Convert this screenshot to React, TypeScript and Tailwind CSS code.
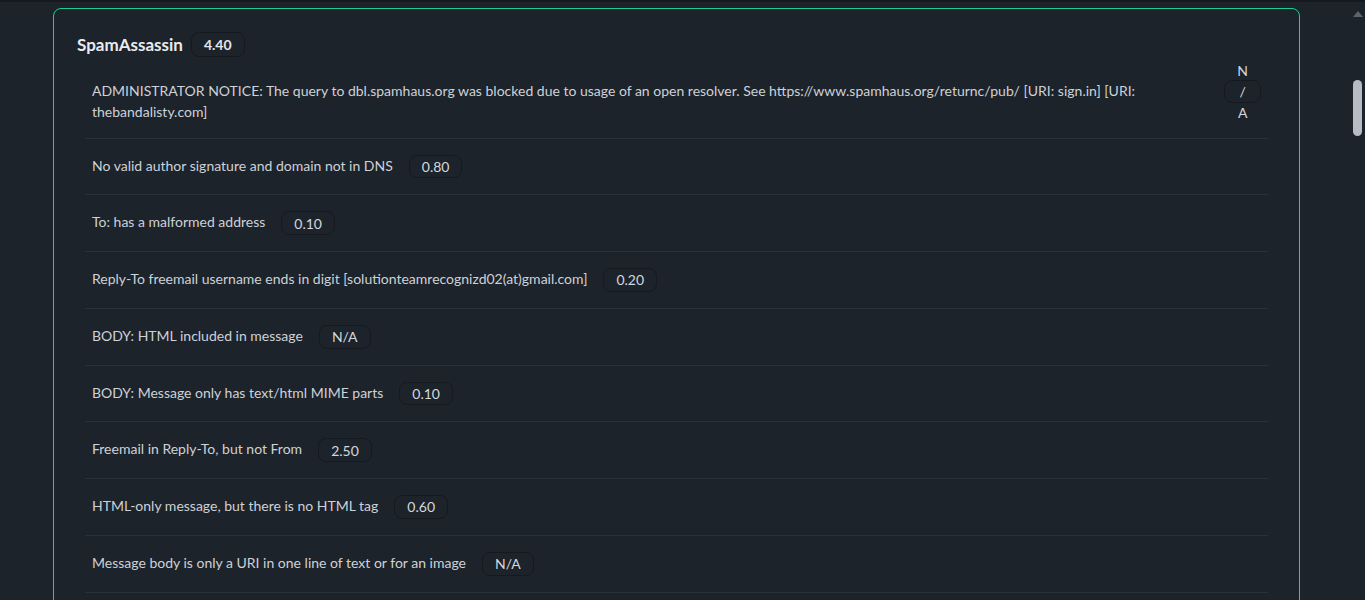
import React from "react"

type Rule = { label: string; score: string }

const rules: Rule[] = [
  {
    label:
      "ADMINISTRATOR NOTICE: The query to dbl.spamhaus.org was blocked due to usage of an open resolver. See https://www.spamhaus.org/returnc/pub/ [URI: sign.in] [URI: thebandalisty.com]",
    score: "N/A",
  },
  { label: "No valid author signature and domain not in DNS", score: "0.80" },
  { label: "To: has a malformed address", score: "0.10" },
  {
    label: "Reply-To freemail username ends in digit [solutionteamrecognizd02(at)gmail.com]",
    score: "0.20",
  },
  { label: "BODY: HTML included in message", score: "N/A" },
  { label: "BODY: Message only has text/html MIME parts", score: "0.10" },
  { label: "Freemail in Reply-To, but not From", score: "2.50" },
  { label: "HTML-only message, but there is no HTML tag", score: "0.60" },
  { label: "Message body is only a URI in one line of text or for an image", score: "N/A" },
]

function Badge({ children }: { children: React.ReactNode }) {
  return (
    <span className="flex h-[23.75px] shrink-[400] items-center justify-center rounded-lg border border-[#161a1f] px-3 text-center text-sm leading-[21px] text-[#d3d7de] [overflow-wrap:anywhere]">
      {children}
    </span>
  )
}

export default function App() {
  return (
    <div className="flex h-[600px] flex-col overflow-hidden bg-[#1d232a] font-['Lato',sans-serif]">
      {/* top edge of the navbar */}
      <div className="h-[2px] shrink-0 bg-[#15191e]" />

      <div className="flex min-h-0 flex-1">
        <main className="w-[1350px] shrink-0 pl-[53px] pt-[6px]">
          <section className="w-[1247px] rounded-lg border border-[#1fcb98] px-[23px] pt-[23px] pb-6">
            <div className="flex items-center gap-2">
              <h2 className="text-[17px] font-bold text-[#e8ebef]">SpamAssassin</h2>
              <span className="flex h-[25px] items-center rounded-lg border border-[#161a1f] px-3 text-sm font-bold text-[#e3e6ea]">
                4.40
              </span>
            </div>

            <ul className="mx-2 mt-[6px]">
              {rules.map((r) => (
                <li
                  key={r.label}
                  className="flex items-start gap-4 border-b border-[#2a3038] px-[7px] py-4"
                >
                  <span className="text-sm leading-[21px] text-[#cdd1d8]">{r.label}</span>
                  <Badge>{r.score}</Badge>
                </li>
              ))}
            </ul>
          </section>
        </main>

        {/* page scrollbar */}
        <div className="flex w-[15px] shrink-0 flex-col items-center">
          <svg width="10" height="6" viewBox="0 0 10 6" className="mt-[9px]">
            <path d="M0 6 L5 0 L10 6 Z" fill="#5b636d" />
          </svg>
          <div className="mt-[63px] h-[56px] w-[9px] rounded-full bg-[#b7bcc3]" />
        </div>
      </div>
    </div>
  )
}
